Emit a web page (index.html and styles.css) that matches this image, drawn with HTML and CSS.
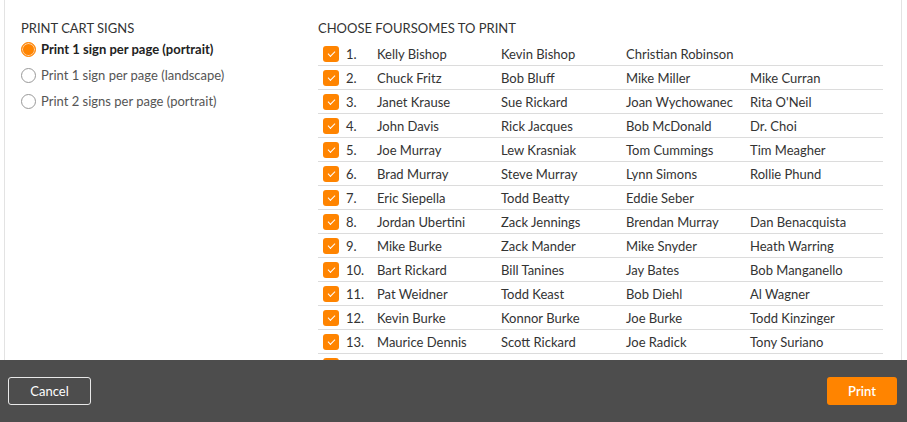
FILE: index.html
```html
<!DOCTYPE html>
<html lang="en">
<head>
  <meta charset="UTF-8" />
  <title>Print Cart Signs</title>
  <link rel="stylesheet" href="styles.css">
</head>
<body>
  <div class="modal">
    <div class="content">
      <div class="options">
        <h3>Print Cart Signs</h3>
        <label class="radio checked"><span class="dot"></span>Print 1 sign per page (portrait)</label>
        <label class="radio"><span class="dot"></span>Print 1 sign per page (landscape)</label>
        <label class="radio"><span class="dot"></span>Print 2 signs per page (portrait)</label>
      </div>
      <div class="foursomes">
        <h3>Choose Foursomes To Print</h3>
        <ul class="list">
          <li><span class="check"></span><span class="num">1.</span><span>Kelly Bishop</span><span>Kevin Bishop</span><span>Christian Robinson</span><span></span></li>
          <li><span class="check"></span><span class="num">2.</span><span>Chuck Fritz</span><span>Bob Bluff</span><span>Mike Miller</span><span>Mike Curran</span></li>
          <li><span class="check"></span><span class="num">3.</span><span>Janet Krause</span><span>Sue Rickard</span><span>Joan Wychowanec</span><span>Rita O'Neil</span></li>
          <li><span class="check"></span><span class="num">4.</span><span>John Davis</span><span>Rick Jacques</span><span>Bob McDonald</span><span>Dr. Choi</span></li>
          <li><span class="check"></span><span class="num">5.</span><span>Joe Murray</span><span>Lew Krasniak</span><span>Tom Cummings</span><span>Tim Meagher</span></li>
          <li><span class="check"></span><span class="num">6.</span><span>Brad Murray</span><span>Steve Murray</span><span>Lynn Simons</span><span>Rollie Phund</span></li>
          <li><span class="check"></span><span class="num">7.</span><span>Eric Siepella</span><span>Todd Beatty</span><span>Eddie Seber</span><span></span></li>
          <li><span class="check"></span><span class="num">8.</span><span>Jordan Ubertini</span><span>Zack Jennings</span><span>Brendan Murray</span><span>Dan Benacquista</span></li>
          <li><span class="check"></span><span class="num">9.</span><span>Mike Burke</span><span>Zack Mander</span><span>Mike Snyder</span><span>Heath Warring</span></li>
          <li><span class="check"></span><span class="num">10.</span><span>Bart Rickard</span><span>Bill Tanines</span><span>Jay Bates</span><span>Bob Manganello</span></li>
          <li><span class="check"></span><span class="num">11.</span><span>Pat Weidner</span><span>Todd Keast</span><span>Bob Diehl</span><span>Al Wagner</span></li>
          <li><span class="check"></span><span class="num">12.</span><span>Kevin Burke</span><span>Konnor Burke</span><span>Joe Burke</span><span>Todd Kinzinger</span></li>
          <li><span class="check"></span><span class="num">13.</span><span>Maurice Dennis</span><span>Scott Rickard</span><span>Joe Radick</span><span>Tony Suriano</span></li>
          <li><span class="check"></span></li>
        </ul>
      </div>
    </div>
    <div class="footer">
      <button class="btn cancel">Cancel</button>
      <button class="btn print">Print</button>
    </div>
  </div>
</body>
</html>
```

FILE: styles.css
```css
body {
  margin: 0;
  font-family: Lato, 'Open Sans', sans-serif;
  font-size: 13px;
  color: #333;
  background: #fff;
}
.modal {
  height: 422px;
  display: flex;
  flex-direction: column;
  overflow: hidden;
}
.content {
  height: 360px;
  margin: 0 5px 0 4px;
  border-left: 1px solid #e3e3e3;
  border-right: 1px solid #e3e3e3;
  display: flex;
  overflow: hidden;
  box-sizing: border-box;
}
h3 {
  margin: 0;
  font-size: 13px;
  font-weight: 400;
  text-transform: uppercase;
  line-height: 16px;
  color: #333;
}
.options {
  width: 313px;
  padding: 20px 0 0 16px;
  box-sizing: border-box;
}
.radio {
  display: flex;
  align-items: center;
  height: 26px;
  color: #555;
}
.radio .dot {
  width: 13px;
  height: 13px;
  border: 1px solid #999;
  border-radius: 50%;
  margin-right: 5px;
  box-sizing: content-box;
}
.radio.checked {
  color: #222;
  font-weight: 700;
}
.radio.checked .dot {
  background: #ff8400;
  border-color: #ff8400;
  box-shadow: inset 0 0 0 1px #ffd3a8;
}
.foursomes {
  width: 565px;
  padding-top: 20px;
}
.list {
  list-style: none;
  margin: 6px 0 0;
  padding: 0;
}
.list li {
  display: grid;
  grid-template-columns: 16px 38px 124px 125px 124px 1fr;
  align-items: center;
  height: 24px;
  padding-left: 5px;
  border-bottom: 1px solid #dcdcdc;
  box-sizing: border-box;
  color: #333;
}
.list .num {
  padding-left: 7px;
}
.check {
  width: 16px;
  height: 16px;
  border-radius: 3px;
  background: #ff8400;
  position: relative;
}
.check::after {
  content: "";
  position: absolute;
  left: 5px;
  top: 5px;
  width: 6px;
  height: 3px;
  border-left: 1.5px solid #fff;
  border-bottom: 1.5px solid #fff;
  transform: rotate(-45deg);
}
.footer {
  height: 62px;
  background: #4d4d4d;
  display: flex;
  align-items: center;
  justify-content: space-between;
  padding: 0 10px 0 8px;
}
.btn {
  height: 28px;
  border-radius: 3px;
  font-family: Lato, 'Open Sans', sans-serif;
  font-size: 13px;
  color: #fff;
  cursor: pointer;
}
.cancel {
  width: 83px;
  background: transparent;
  border: 1px solid #e8e8e8;
}
.print {
  width: 70px;
  background: #ff8400;
  border: none;
  font-weight: 600;
}
```
